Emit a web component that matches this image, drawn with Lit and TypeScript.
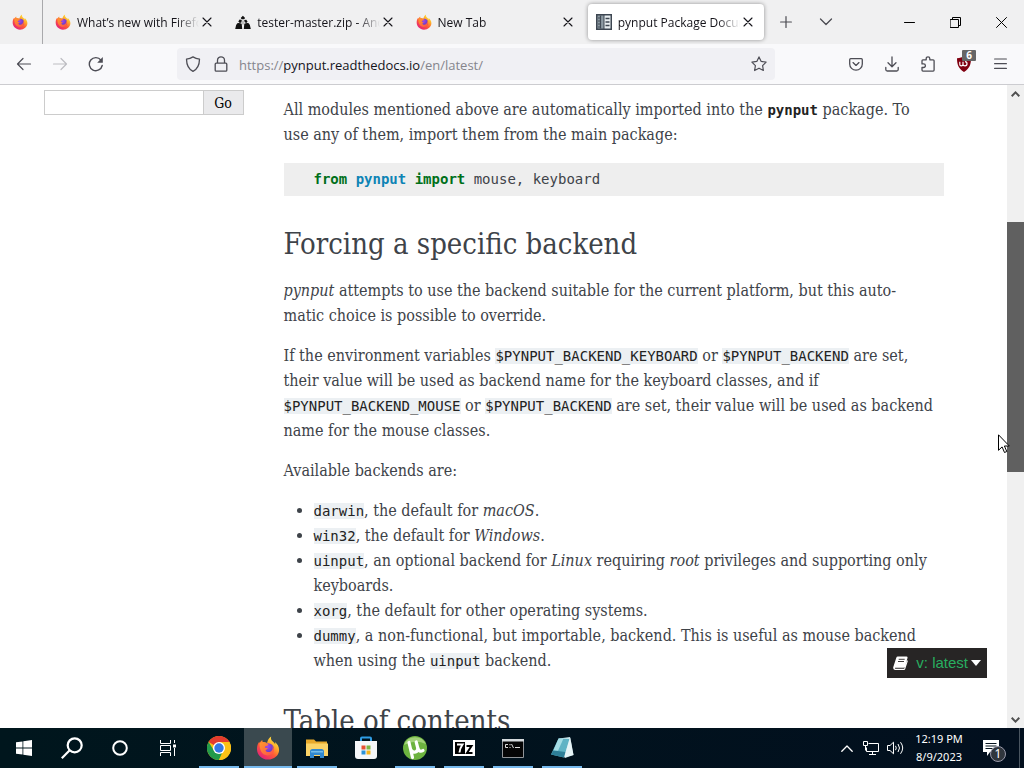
import { LitElement, html, svg, css } from "lit";
import { customElement } from "lit/decorators.js";
import { classMap } from "lit/directives/class-map.js";

const firefox = (size: number) => html`<svg class="ico" width=${size} height=${size} viewBox="0 0 24 24" aria-hidden="true">
  <defs>
    <linearGradient id="fx-body" x1="0.85" y1="0.05" x2="0.2" y2="0.95">
      <stop offset="0" stop-color="#fff04a" /><stop offset="0.3" stop-color="#ffb02a" />
      <stop offset="0.6" stop-color="#ff5a35" /><stop offset="1" stop-color="#e2207c" />
    </linearGradient>
    <radialGradient id="fx-globe" cx="0.45" cy="0.3" r="0.75">
      <stop offset="0" stop-color="#a348e8" /><stop offset="1" stop-color="#4f35b8" />
    </radialGradient>
    <linearGradient id="fx-head" x1="0" y1="0" x2="1" y2="1">
      <stop offset="0" stop-color="#ff9a2c" /><stop offset="1" stop-color="#ff4f4a" />
    </linearGradient>
  </defs>
  <path fill="url(#fx-body)" d="M15.2.6c-.7 2.200 0 3.500 1.600 5 1.200 1 1.700 1.500 2.400 2.900.1-.9 0-1.700-.3-2.500 2.700 2 4.200 5 4.200 7.900C23.100 19.300 18 23.500 12 23.500 5.700 23.500 1 18.800 1 12.900c0-3 .9-5.400 2.200-7.100l.5 1.200c.6-1.300 1.500-2.400 2.600-3.100-.1.9.1 1.600.6 2.100 1.400-.2 2.900.1 4.200.9C11.600 4.400 12.800 1.900 15.200.6z" />
  <circle cx="12.200" cy="12.800" r="5.600" fill="url(#fx-globe)" />
  <path fill="url(#fx-head)" d="M3.700 7c1.400-1 3.300-1 5-.2 1.100.6 2 1.100 3.700 1.100.2 1.300-1.600 1.700-2.900 2.400-.6.4-.4 1.200-.7 1.700 1.100-.4 2.200-.1 3.400.5-.9.2-1.500 1.300-2.700 1.700.7 1.900 3.300 2.400 5.300 1.200 1.600-1 2.500-3 1.500-5.500 2.600 2.200 2.400 6.200-.4 8.200-3.500 2.400-8.700 1.300-10.600-2.300C3.800 12.900 3.400 9.800 3.700 7z" />
</svg>`;

const line = (w: number, h: number, box: string, width: number, d: string) => html`<svg class="ico" width=${w} height=${h} viewBox=${box} fill="none"
  stroke="currentColor" stroke-width=${width} stroke-linecap="round" stroke-linejoin="round" aria-hidden="true">${svg`<path d=${d} />`}</svg>`;

const closeGlyph = line(10, 10, "0 0 10 10", 1.1, "M1 1l8 8M9 1l-8 8");

const anonIcon = html`<svg class="ico" width="16" height="16" viewBox="0 0 16 16" aria-hidden="true">
  <path fill="#111" d="M7.900 1.800l2.200 2.200-1 1.200H6.700l-1-1.200zM4.600 5.500l2.200.4-.4 2.600-1.600.4-1.500-1.400zM9.200 5.900l2.100-.2 1.300 2-1.300 1.200-1.600-.6zM2.300 9.200q2.600-.4 4.400.6l.5 5.200H.2Q.4 10.800 2.300 9.200zM13.700 9.200q-2.600-.4-4.400.6L8.800 15h7q-.2-4.200-2.100-5.800z" />
  <path fill="#8b8b8b" d="M7.500 6.500h1v4h-1z" />
</svg>`;

const docsIcon = html`<svg class="ico" width="16" height="16" viewBox="0 0 16 16" aria-hidden="true">
  <rect width="16" height="16" fill="#3d4651" /><rect x="1.500" y="1.500" width="6" height="13" fill="#8d9aa3" />
  <rect x="8.500" y="1.500" width="6" height="13" fill="#e8eef1" />
  <path stroke="#3d4651" stroke-width="1.500" d="M9.500 4.500h4M9.500 8h4M9.500 11.500h4" />
  <path stroke="#414b55" stroke-width="1.200" d="M2 4h2M2 7h2M2 10h2M2 13h2M4.500 1.500v13" />
</svg>`;

const tabs = [
  { title: "What’s new with Firefo", icon: firefox(16), active: false },
  { title: "tester-master.zip - Ano", icon: anonIcon, active: false },
  { title: "New Tab", icon: firefox(16), active: false },
  { title: "pynput Package Docun", icon: docsIcon, active: true },
];

@customElement("browser-chrome")
class BrowserChrome extends LitElement {
  static styles = css`
    :host { display: block; flex: none; font: 12px/16px "Open Sans", "Noto Sans", sans-serif; color: #15141a; }
    .ico { display: block; flex: none; }
    button { appearance: none; border: 0; margin: 0; padding: 0; background: none; color: inherit; font: inherit;
      display: flex; align-items: center; justify-content: center; }
    .tabs { display: flex; align-items: center; height: 44px; background: #f0f0f1; }
    .pinned { width: 43px; align-self: stretch; padding-right: 3px; box-sizing: border-box; border-right: 1px solid #a9a9ac; }
    .strip { display: flex; flex: 0 1 723px; min-width: 0; padding-left: 2px; box-sizing: border-box; }
    .tab { display: flex; flex: 1; min-width: 0; box-sizing: border-box; align-items: center; height: 36px; margin: 0 2px; padding: 0 8px; border-radius: 4px; }
    .tab.active { background: #fff; box-shadow: 0 0 4px rgba(0, 0, 0, 0.4); }
    .label { flex: 1; min-width: 0; margin-left: 6px; padding-top: 1px; overflow: hidden; white-space: nowrap; mask-image: linear-gradient(to left, transparent, #000 22px); }
    .close { width: 16px; height: 16px; }
    .new { width: 40px; height: 36px; color: #4b4b52; }
    .gap { margin-left: auto; }
    .win { width: 46px; height: 44px; color: #000; }
    .bar { display: flex; align-items: center; height: 40px; background: #f9f9fb; border-bottom: 1px solid #ccccd0; padding: 0 6px; color: #4d4d55; }
    .tool { width: 36px; height: 32px; position: relative; }
    .off { color: #bdbdc2; }
    .url { flex: 1; max-width: 598px; margin-left: 63px; display: flex; align-items: center; height: 32px; border-radius: 4px; background: #f0f0f4; }
    .url button { width: 28px; height: 32px; }
    .url .first { margin-left: 2px; }
    .url .star { width: 32px; }
    .address { flex: 1; padding: 1px 0 0 4px; font-size: 13px; line-height: 18px; color: #85858c; white-space: nowrap; overflow: hidden; text-decoration: none; }
    .address b { font-weight: 400; color: #15141a; }
    .count { position: absolute; left: 16px; top: 2px; width: 14px; height: 11px; background: #666; color: #fff; font-size: 10px; line-height: 11px; font-weight: 700; text-align: center; border-radius: 1px; }
  `;

  render() {
    return html`
      <div class="tabs">
        <button class="pinned" aria-label="Pinned tab">${firefox(16)}</button>
        <div class="strip">
          ${tabs.map((t) => html`<div class=${classMap({ tab: true, active: t.active })}>
            ${t.icon}<span class="label">${t.title}</span><button class="close" aria-label="Close tab">${closeGlyph}</button>
          </div>`)}
        </div>
        <button class="new" aria-label="New tab">${line(12, 12, "0 0 12 12", 1.2, "M6 .6v10.800M.6 6h10.800")}</button>
        <button class="new" aria-label="List all tabs">${line(14, 8, "0 0 14 8", 1.3, "M1.500 1L7 6.500 12.500 1")}</button>
        <div class="gap"></div>
        <button class="win" aria-label="Minimize">${line(11, 11, "0 0 11 11", 1, "M.5 5.500h10")}</button>
        <button class="win" aria-label="Restore">${line(11, 11, "0 0 11 11", 1, "M.5 2.500h8v8h-8zM2.500 2.500v-2h8v8h-2")}</button>
        <button class="win" aria-label="Close window">${line(11, 11, "0 0 11 11", 1, "M.5.5l10 10M10.500.5l-10 10")}</button>
      </div>
      <div class="bar">
        <button class="tool" aria-label="Back">${line(16, 14, "0 0 16 14", 1.2, "M7 1.500L1.500 7 7 12.500M1.500 7h13")}</button>
        <button class="tool off" aria-label="Forward">${line(16, 14, "0 0 16 14", 1.2, "M9 1.500L14.500 7 9 12.500M14.500 7h-13")}</button>
        <button class="tool" aria-label="Reload"><svg class="ico" width="16" height="16" viewBox="0 0 16 16" aria-hidden="true">
          <path fill="none" stroke="currentColor" stroke-width="1.400" stroke-linecap="round" d="M14.200 9.500A6.500 6.500 0 1 1 13 4.200" />
          <path fill="currentColor" d="M14.800 1v5.700H9.200z" /></svg></button>
        <div class="url">
          <button class="first" aria-label="Tracking protection">${line(16, 16, "0 0 16 16", 1.3, "M8 .9c2 1.200 4 1.900 6.500 2.300C14.400 9 12.700 13 8 15.300 3.300 13 1.600 9 1.500 3.200 4 2.800 6 2.100 8 .9z")}</button>
          <button aria-label="Site information">${line(14, 16, "0 0 14 16", 1.3, "M3.500 7V4.300a3.500 3.500 0 0 1 7 0V7M2.200 7.200h9.600q1 0 1 1v6q0 1-1 1H2.200q-1 0-1-1v-6q0-1 1-1z")}</button>
          <a class="address" href="https://pynput.readthedocs.io/en/latest/">https://<b>pynput.readthedocs.io</b>/en/latest/</a>
          <button class="star" aria-label="Bookmark">${line(16, 16, "0 0 16 16", 1.2, "M8 .9l2.200 4.500 4.900.7-3.500 3.500.8 4.900L8 12.200l-4.400 2.300.8-4.900L.9 6.100l4.900-.7z")}</button>
        </div>
        <div class="gap"></div>
        <button class="tool" aria-label="Pocket">${line(14, 13, "0 0 14 13", 1.3, "M1.700.7h10.600q1 0 1 1v4.200a6.300 6.300 0 0 1-12.600 0V1.700q0-1 1-1zM4 4.600l3 2.800 3-2.800")}</button>
        <button class="tool" aria-label="Downloads">${line(14, 16, "0 0 14 16", 1.3, "M7 1v9.500M3 6.800l4 4 4-4M.8 11.500v2q0 1.500 1.500 1.500h9.400q1.500 0 1.500-1.500v-2")}</button>
        <button class="tool" aria-label="Extensions">${line(14, 16, "0 0 14 16", 1.3, "M1 6V4.700q0-.9.9-.9h3.300V2.600a1.800 1.800 0 0 1 3.600 0v1.200h3.300q1 0 1 1v9.300q0 1-1 1H2q-1 0-1-1v-2.600h1.600a1.800 1.800 0 0 0 0-3.600H1z")}</button>
        <button class="tool" aria-label="uBlock Origin, 6 blocked"><svg class="ico" width="16" height="16" viewBox="0 0 16 16" aria-hidden="true">
          <path fill="#800010" d="M8 0c2 1.400 4 2 7 2.200 0 6.300-1.500 10.300-7 13.800C2.500 12.500 1 8.500 1 2.200 4 2 6 1.400 8 0z" />
          <path fill="none" stroke="#fff" stroke-width="1.200" d="M3.800 5.800v2.600q0 1.400 1.500 1.400T7 8.400V5.800M7 8.400q0 1.400 2 1.400t2-2-2-2.100" /></svg><span class="count">6</span></button>
        <button class="tool" aria-label="Menu">${line(13, 12, "0 0 13 12", 1.2, "M.6 1h11.800M.6 5.700h11.800M.6 10.400h11.800")}</button>
      </div>`;
  }
}

@customElement("docs-page")
class DocsPage extends LitElement {
  static styles = css`
    :host { display: flex; flex: 1; min-height: 0; position: relative; background: #fff; color: #3e4349; overflow: hidden; }
    .view { flex: 1; min-width: 0; overflow: hidden; font: 16px/25px "DejaVu Serif Condensed", "Liberation Serif", serif; }
    .doc { display: flex; max-width: 940px; margin: 0 auto; }
    .side { flex: none; width: 200px; padding: 5px 10px; }
    form { display: flex; }
    .query { flex: 1; min-width: 0; height: 25px; box-sizing: border-box; border: 1px solid #ccc; border-right: 0; background: #fff; margin: 0; border-radius: 0; }
    .go { width: 41px; height: 25px; box-sizing: border-box; border: 1px solid #ccc; background: #eaeaec; color: #000; font: 14px/20px "DejaVu Serif Condensed", "Liberation Serif", serif; padding: 0; border-radius: 0; }
    .body { flex: 1; min-width: 0; padding: 12px 30px 0; }
    p { margin: 0 0 15px; }
    pre { margin: 16px 0 29px; padding: 4px 30px; background: #eee; font: 14px/25px "DejaVu Sans Mono", monospace; color: #3e4349; }
    h2 { margin: 0 0 15px; font-size: 29px; line-height: 38px; font-weight: 400; }
    ul { margin: 0 0 29px; padding: 0 0 0 30px; }
    code { font: 14px/20px "DejaVu Sans Mono", monospace; color: #222; background: #ecf0f3; }
    .plain { background: none; font-weight: 700; }
    .kw { color: #00701a; font-weight: 700; }
    .mod { color: #0e84b5; font-weight: 700; }
    .scroll { flex: none; width: 17px; display: grid; grid-template-rows: 17fr 120fr 250fr 239fr 17fr; background: #f0f0f0; color: #606060; }
    .scroll svg { place-self: center; }
    .thumb { grid-row: 3; background: #606060; }
    .down { grid-row: 5; }
    .version { position: absolute; right: 37px; bottom: 50px; height: 30px; padding: 0 6px; display: flex; align-items: center; gap: 3px; border: 0; background: #272525; color: #27ae60; font: 15px/20px "Liberation Sans", sans-serif; }
    .version .book { margin-right: 5px; }
    .pointer { position: absolute; left: 998px; top: 349px; }
  `;

  render() {
    return html`
      <div class="view"><div class="doc">
        <aside class="side"><form>
          <input class="query" type="text" aria-label="Quick search" /><button class="go" type="button">Go</button>
        </form></aside>
        <main class="body">
          <p>All modules mentioned above are automatically imported into the <code class="plain">pynput</code> package. To<br />use any of them, import them from the main package:</p>
          <pre><span class="kw">from</span> <span class="mod">pynput</span> <span class="kw">import</span> mouse, keyboard</pre>
          <h2>Forcing a specific backend</h2>
          <p><em>pynput</em> attempts to use the backend suitable for the current platform, but this auto-<br />matic choice is possible to override.</p>
          <p>If the environment variables <code>$PYNPUT_BACKEND_KEYBOARD</code> or <code>$PYNPUT_BACKEND</code> are set, their value will be used as backend name for the keyboard classes, and if <code>$PYNPUT_BACKEND_MOUSE</code> or <code>$PYNPUT_BACKEND</code> are set, their value will be used as backend name for the mouse classes.</p>
          <p>Available backends are:</p>
          <ul>
            <li><code>darwin</code>, the default for <em>macOS</em>.</li>
            <li><code>win32</code>, the default for <em>Windows</em>.</li>
            <li><code>uinput</code>, an optional backend for <em>Linux</em> requiring <em>root</em> privileges and supporting only keyboards.</li>
            <li><code>xorg</code>, the default for other operating systems.</li>
            <li><code>dummy</code>, a non-functional, but importable, backend. This is useful as mouse backend when using the <code>uinput</code> backend.</li>
          </ul>
          <h2>Table of contents</h2>
        </main>
      </div></div>
      <div class="scroll" aria-hidden="true">
        <svg width="9" height="6" viewBox="0 0 9 6" fill="none" stroke="#505050" stroke-width="2"><path d="M.7 5.200l3.800-3.800 3.800 3.800" /></svg>
        <div class="thumb"></div>
        <svg class="down" width="9" height="6" viewBox="0 0 9 6" fill="none" stroke="#505050" stroke-width="2"><path d="M.7.8l3.800 3.800L8.300.8" /></svg>
      </div>
      <button class="version">
        <svg class="book" width="15" height="14" viewBox="0 0 15 14" aria-hidden="true">
          <path fill="#fff" d="M4.800.5h8.700q1.300.1 1 1.500l-2.600 8.800q-.3 1-1.400 1H2.200q-.7.6.2 1h8.800l2.800-8.500q1 .4.700 1.200L12.200 13q-.3.9-1.300.9H2Q-.3 13.300.3 11L3.300 1.700Q3.700.6 4.800.5z" />
          <path stroke="#272525" stroke-width="0.900" d="M5.700 3.300h6M5 5.500h6" /></svg>
        <span>v: latest</span>
        <svg width="10" height="6" viewBox="0 0 10 6" aria-hidden="true"><path fill="#fff" d="M0 0h10L5 6z" /></svg>
      </button>
      <svg class="pointer" width="12" height="20" viewBox="0 0 12 20" aria-hidden="true"><path fill="#fff" stroke="#000" d="M.5.800v15.500l3.600-3.400 2.400 5.600 2.300-1-2.400-5.500h4.900z" /></svg>`;
  }
}

const appIcons = [
  { name: "Chrome", open: true, active: false, icon: html`<svg width="24" height="24" viewBox="0 0 24 24" aria-hidden="true">
      <circle cx="12" cy="12" r="12" fill="#fbc116" /><path fill="#e33b2e" d="M12 12L1.600 6a12 12 0 0 1 20.800 0z" />
      <path fill="#229a4b" d="M12 24A12 12 0 0 1 1.600 6l5.600 9 7.700 2.200z" /><path fill="#fbc116" d="M12 6h10.400A12 12 0 0 1 12 24l5.200-9z" />
      <circle cx="12" cy="12" r="6" fill="#fff" /><circle cx="12" cy="12" r="4.700" fill="#3478e5" /></svg>` },
  { name: "Firefox", open: true, active: true, icon: firefox(24) },
  { name: "File Explorer", open: true, active: false, icon: html`<svg width="22" height="20" viewBox="0 0 22 20" aria-hidden="true">
      <path fill="#e8a92b" d="M0 1.500h8l2 2h11v5H0z" /><path fill="#fbd367" d="M0 5.500h22V18H0z" />
      <path fill="#3188cf" d="M4 20v-6.500Q4 11 6.500 11h9q2.500 0 2.500 2.500V20h-4v-3H8v3z" /><path fill="#73bce9" d="M5 13h12v1.500H5z" /></svg>` },
  { name: "Microsoft Store", open: false, active: false, icon: html`<svg width="24" height="24" viewBox="0 0 24 24" aria-hidden="true">
      <path fill="none" stroke="#2f9de4" stroke-width="2" d="M7 6V2.500q0-1 1-1h8q1 0 1 1V6" /><path fill="#f5f7f9" d="M1 5h22v15q0 3-3 3H4q-3 0-3-3z" />
      <path fill="#e65032" d="M7.500 9.500h4v4h-4z" /><path fill="#7eb643" d="M12.500 9.500h4v4h-4z" /><path fill="#2d93d8" d="M7.500 14.500h4v4h-4z" /><path fill="#f4b41d" d="M12.500 14.500h4v4h-4z" /></svg>` },
  { name: "uTorrent", open: true, active: false, icon: html`<svg width="24" height="24" viewBox="0 0 24 24" aria-hidden="true">
      <circle cx="12" cy="12" r="12" fill="#6db33f" /><path fill="#a2d279" d="M1 9A12 12 0 0 1 23 8Q12 3 1 9z" />
      <path fill="none" stroke="#fff" stroke-width="3.200" stroke-linecap="round" stroke-linejoin="round" d="M6 6.500l3.500 15M7.500 13q1.500 4 5 3 3.300-1.300 2-5l-1.300-5M14.500 11q1.500 6 5.500 3.500" /></svg>` },
  { name: "7-Zip", open: true, active: false, icon: html`<svg width="22" height="16" viewBox="0 0 22 16" aria-hidden="true">
      <path fill="#fff" d="M0 0h22v16H0z" /><path fill="#000" d="M2 2h10v12H2z" /><path fill="none" stroke="#fff" stroke-width="2" d="M4 4.500h5.500Q7 8 6.500 12.500" />
      <path fill="none" stroke="#000" stroke-width="2" d="M13.500 6h5l-4.500 7h5.500" /></svg>` },
  { name: "Command Prompt", open: true, active: false, icon: html`<svg width="22" height="19" viewBox="0 0 22 19" aria-hidden="true">
      <path fill="#050505" stroke="#909498" d="M.5.500h21v18H.5z" /><path fill="#d5dadd" d="M0 0h22v2.500H0z" />
      <path fill="none" stroke="#ddd" d="M6 5.500H3.500v3H6M8 5v1.300M8 8v1M9.500 5l2 4M13 8.500h5" /></svg>` },
  { name: "Notepad", open: true, active: false, icon: html`<svg width="24" height="24" viewBox="0 0 24 24" aria-hidden="true">
      <path fill="#c9e7ec" d="M9 2.500l11-1.500 3.500 18-8.500 3z" /><path fill="#5fb3c5" d="M8.500 2.500L19.500 3 14 21.500 1 18.500z" />
      <path fill="#2e7f98" d="M3.500 14.500l12 1.500-1.500 5.500-13-3z" /><path fill="#a5dde5" d="M8.500 2.500h5L8 14.800l-4.500-.6z" /><path fill="#eef8fa" d="M19.500 3l.8-1.500L23.500 19 14 21.500z" opacity="0.800" /></svg>` },
];

@customElement("task-bar")
class TaskBar extends LitElement {
  static styles = css`
    :host { display: flex; flex: none; height: 40px; background: linear-gradient(90deg, #00161d, #020f1e); color: #fff; font: 11px/18px "Noto Sans", sans-serif; }
    button { appearance: none; border: 0; margin: 0; padding: 0; box-sizing: border-box; width: 48px; height: 40px; flex: none; background: none; color: inherit; font: inherit; display: flex; align-items: center; justify-content: center; position: relative; }
    .apps { display: flex; gap: 1px; margin-left: 3px; flex: 1; min-width: 0; overflow: hidden; }
    .open { background: linear-gradient(#76b9ed, #76b9ed) center bottom / 40px 2px no-repeat; }
    .active { background: linear-gradient(#76b9ed, #76b9ed) center bottom / 48px 2px no-repeat #3a494f; }
    .tray { width: 24px; }
    .clock { width: 64px; flex-direction: column; }
    .note { padding-right: 8px; }
    .desk { width: 5px; border-left: 1px solid #4a5560; }
    .num { position: absolute; left: 19px; top: 18px; width: 14px; height: 14px; border: 1px solid #99a; border-radius: 50%; background: #30363d; font-size: 12px; line-height: 14px; text-align: center; }
  `;

  render() {
    return html`
      <button aria-label="Start"><svg width="16" height="16" viewBox="0 0 16 16"><path fill="#fff" d="M0 2.300l6.500-.9v6.200H0zM7.300 1.300L16 0v7.600H7.300zM0 8.400h6.500v6.200L0 13.700zM7.300 8.400H16V16l-8.700-1.300z" /></svg></button>
      <button aria-label="Search"><svg width="22" height="22" viewBox="0 0 22 22" fill="none" stroke="#fff" stroke-width="2.200"><circle cx="13.700" cy="8.300" r="7" /><path d="M8.700 13.300L.8 21.200" /></svg></button>
      <button aria-label="Cortana"><svg width="16" height="16" viewBox="0 0 16 16" fill="none" stroke="#fff" stroke-width="2"><circle cx="8" cy="8" r="6.800" /></svg></button>
      <button aria-label="Task view"><svg width="16" height="16" viewBox="0 0 16 16" fill="none" stroke="#fff" stroke-width="1"><path d="M.5 0v3.500h10V0M.5 16v-3.500h10V16M.5 5.500h10v5H.5zM14.500 0v3M14.500 8v8" /><path stroke-width="3" d="M14.500 4.500v3" /></svg></button>
      <div class="apps">
        ${appIcons.map((a) => html`<button class=${classMap({ open: a.open, active: a.active })} aria-label=${a.name}>${a.icon}</button>`)}
      </div>
      <button class="tray" aria-label="Hidden icons">${line(12, 7, "0 0 12 7", 1.3, "M.8 6.200L6 1l5.200 5.200")}</button>
      <button class="tray" aria-label="Network"><svg width="16" height="14" viewBox="0 0 16 14" fill="none" stroke="#fff"><path d="M5.500 2.500h10v8h-12v-4M9.500 10.500v3M6 13.500h7M.5.500h4v4h-4zM2.500 4.500v5" /></svg></button>
      <button class="tray" aria-label="Volume"><svg width="17" height="14" viewBox="0 0 17 14" fill="none" stroke="#fff"><path d="M.5 4.500h2.500l3.500-3.300v11.600L3 9.500H.5zM8.500 4.800q1.500 2.200 0 4.400M11 3q3 4 0 8M13.500 1.200q4.400 5.800 0 11.600" /></svg></button>
      <button class="clock"><span>12:19 PM</span><span>8/9/2023</span></button>
      <button class="note" aria-label="Notifications"><svg width="16" height="16" viewBox="0 0 16 16"><path fill="#fff" d="M0 0h16v12H7l-3 4v-4H0z" /><path stroke="#07141f" d="M2.500 3.500h11M2.500 6h11M2.500 8.500h7" /></svg><span class="num">1</span></button>
      <button class="desk" aria-label="Show desktop"></button>`;
  }
}

@customElement("app-root")
class AppRoot extends LitElement {
  static styles = css`
    :host { display: flex; flex-direction: column; height: 100vh; overflow: hidden; }
  `;

  render() {
    return html`<browser-chrome></browser-chrome><docs-page></docs-page><task-bar></task-bar>`;
  }
}
